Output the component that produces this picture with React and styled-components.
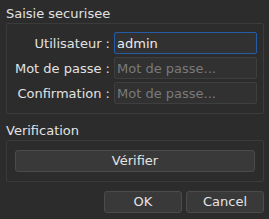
import React from 'react';
import styled, { createGlobalStyle } from 'styled-components';

const GlobalStyle = createGlobalStyle`
  html, body {
    margin: 0;
    padding: 0;
    background: #2c2c2c;
  }
  body {
    font-family: 'DejaVu Sans', 'Liberation Sans', sans-serif;
    font-size: 13px;
    color: #e2e2e2;
  }
`;

const Dialog = styled.div`
  display: flex;
  flex-direction: column;
  width: 269px;
  height: 219px;
  box-sizing: border-box;
  padding: 6px 5px 0 6px;
`;

const GroupTitle = styled.div`
  line-height: 15px;
  height: 15px;
  margin-top: ${(p) => (p.$first ? '0' : '9px')};
  margin-bottom: 2px;
`;

const Frame = styled.div`
  border: 1px solid #3b3b3b;
  border-radius: 2px;
  padding: ${(p) => p.$pad};
`;

const FormGrid = styled.div`
  display: grid;
  grid-template-columns: 1fr 143px;
  column-gap: 4px;
  row-gap: 3px;
  align-items: center;
`;

const Label = styled.label`
  text-align: right;
  white-space: nowrap;
  line-height: 15px;
`;

const Input = styled.input`
  box-sizing: border-box;
  width: 143px;
  height: 22px;
  margin: 0;
  padding: 0 2px;
  border: 1px solid ${(p) => (p.$focused ? '#265ca6' : '#3e3e3e')};
  border-radius: 2px;
  background: #313131;
  color: #ececec;
  font-family: inherit;
  font-size: 13px;
  outline: none;

  &::placeholder {
    color: #7a7a7a;
  }
`;

const Button = styled.button`
  box-sizing: border-box;
  height: 22px;
  width: ${(p) => p.$width || 'auto'};
  margin: 0;
  padding: 0;
  border: 1px solid #4b4b4b;
  border-radius: 3px;
  background: #393939;
  color: #e4e4e4;
  font-family: inherit;
  font-size: 13px;
  line-height: 20px;
`;

const Footer = styled.div`
  display: flex;
  justify-content: flex-end;
  gap: 4px;
  margin-top: 9px;
`;

const App = () => (
  <>
    <GlobalStyle />
    <Dialog>
      <GroupTitle $first>Saisie securisee</GroupTitle>
      <Frame $pad="8px 6px 9px 0">
        <FormGrid>
          <Label>Utilisateur :</Label>
          <Input $focused defaultValue="admin" />
          <Label>Mot de passe :</Label>
          <Input type="password" placeholder="Mot de passe..." />
          <Label>Confirmation :</Label>
          <Input type="password" placeholder="Mot de passe..." />
        </FormGrid>
      </Frame>
      <GroupTitle>Verification</GroupTitle>
      <Frame $pad="9px 8px 9px 8px">
        <Button $width="100%">Vérifier</Button>
      </Frame>
      <Footer>
        <Button $width="78px">OK</Button>
        <Button $width="78px">Cancel</Button>
      </Footer>
    </Dialog>
  </>
);

export default App;
